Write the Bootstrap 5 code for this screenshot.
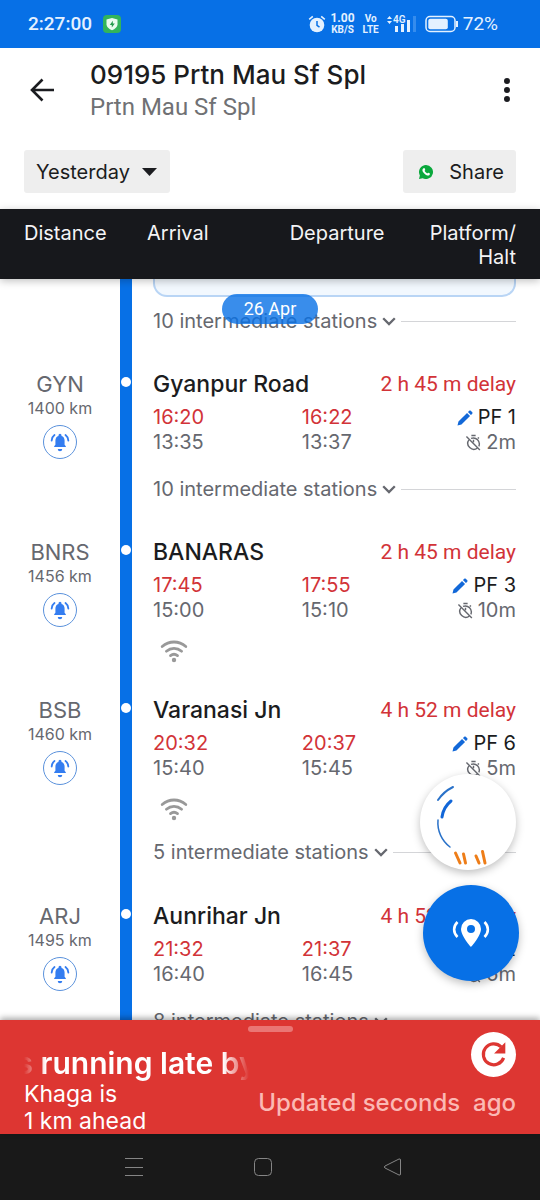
<!DOCTYPE html>
<html lang="en">
<head>
<meta charset="utf-8">
<meta name="viewport" content="width=device-width, initial-scale=1">
<title>09195 Prtn Mau Sf Spl</title>
<link href="https://cdn.jsdelivr.net/npm/bootstrap@5.3.0/dist/css/bootstrap.min.css" rel="stylesheet">
<style>
:root { --rail: #0770e6; --alert: #dd3632; --late: #d23338; --ink: #1b1c20; --soft: #66686f; }
body { font-family: Inter, "Open Sans", sans-serif; color: var(--ink); height: 100vh; background: #fff; }
button { font-family: inherit; }
.roboto { font-family: Roboto, sans-serif; }
.icon-btn { border: 0; background: none; padding: 0; line-height: 0; color: inherit; }
.status-bar { background: var(--rail); color: #e4f1ff; height: 48px; padding: 0 42px 0 28px; font-size: 19px; }
.status-bar .tiny { font-size: 10px; line-height: 11px; font-weight: 700; text-align: center; }
.status-bar .rate { font-size: 12px; }
.title-bar { padding: 12px 24px 0 28px; }
.title-bar h1 { font-size: 26px; line-height: 30px; font-weight: 500; margin: 0; }
.title-bar p { font-size: 24px; line-height: 34px; color: #707174; margin: 0; }
.title-bar .titles { padding-left: 34px; }
.tools { padding: 26px 24px 16px; }
.tool-btn { background: #eee; border: 0; border-radius: 3px; height: 43px; padding: 0 12px; font-size: 20px; color: var(--ink); }
.heads { background: #17181c; color: #f4f4f6; padding: 12px 24px 10px; font-size: 20px; line-height: 24px; display: grid; grid-template-columns: 25% 29% 1fr; box-shadow: 0 2px 8px rgba(0,0,0,.25); z-index: 2; }
.route { min-height: 0; overflow: hidden; }
.code-col { width: 120px; flex: none; text-align: center; color: var(--soft); padding-top: 8px; }
.rail { width: 12px; flex: none; background: var(--rail); display: flex; justify-content: center; padding-top: 13px; }
.rail i { width: 10px; height: 10px; border-radius: 50%; background: #fff; }
.stop-body { padding: 8px 24px 0 21px; min-width: 0; }
.code { font-size: 22px; line-height: 24px; }
.km { font-size: 16px; line-height: 24px; }
.bell { width: 34px; height: 34px; border: 1px solid #5b92dc; border-radius: 50%; color: #347df0; margin-top: 5px; }
.stop-name { font-size: 23px; line-height: 25px; font-weight: 500; margin: 0; }
.delay { font-size: 21px; line-height: 25px; color: var(--late); white-space: nowrap; }
.times { margin-top: 8px; display: grid; grid-template-columns: 41% 1fr auto; font-size: 20px; line-height: 25px; color: var(--soft); }
.times .late { color: var(--late); }
.times .pf { color: var(--ink); }
.times .end { display: flex; align-items: center; justify-content: flex-end; gap: 4px; }
.between { margin: 22px 0 31px; font-size: 20px; line-height: 24px; height: 24px; color: var(--soft); display: flex; align-items: center; gap: 5px; white-space: nowrap; }
.between button { border: 0; background: none; padding: 0; color: inherit; line-height: 24px; display: flex; align-items: center; gap: 5px; }
.between::after { content: ""; flex: 1; height: 1px; background: #d4d5d8; }
.wifi { height: 24px; margin: 16px 0 27px 7px; line-height: 0; }
.wifi + .between { margin: -8px 0 32px; }
.notice { height: 18px; background: #f2f8fe; border: 2px solid #b9d5f5; border-top: 0; border-radius: 0 0 14px 14px; }
.first .stop-body { padding-top: 0; }
.first .between { margin-top: 12px; }
.date-pill { top: 15px; left: 50%; transform: translateX(-50%); width: 96px; line-height: 30px; border-radius: 15px; background: rgba(7,112,230,.8); color: #fff; font-size: 18px; text-align: center; }
.fab { width: 96px; height: 96px; border-radius: 50%; border: 0; padding: 0; line-height: 0; box-shadow: 0 3px 8px rgba(0,0,0,.25); }
.fab.ride { right: 24px; bottom: 150px; background: #fff; }
.fab.locate { right: 21px; bottom: 39px; background: var(--rail); color: #fff; }
.sheet { background: var(--alert); color: #fff; padding: 6px 24px 0; height: 114px; box-shadow: 0 -2px 6px rgba(0,0,0,.35); z-index: 2; }
.grip { width: 45px; height: 6px; border-radius: 3px; background: #ea7674; }
.ticker { width: 225px; margin-top: 13px; font-size: 30px; line-height: 36px; font-weight: 600; white-space: nowrap; overflow: hidden; display: flex; justify-content: center; -webkit-mask-image: linear-gradient(90deg, transparent, #000 22px, #000 calc(100% - 26px), transparent); mask-image: linear-gradient(90deg, transparent, #000 22px, #000 calc(100% - 26px), transparent); }
.near { font-size: 23px; line-height: 27px; margin: 0; }
.updated { font-size: 24px; line-height: 28px; font-weight: 500; color: #fbb9b4; white-space: pre; margin: 12px 0 0 -40px; }
.refresh { width: 45px; height: 45px; border-radius: 50%; background: #fff; color: var(--alert); }
.sys-nav { background: #191919; color: #858585; height: 66px; padding: 0 126px 0 124px; }
</style>
</head>
<body class="d-flex flex-column overflow-hidden">

<svg class="d-none" aria-hidden="true">
  <symbol id="bell" viewBox="0 0 24 24"><path fill="currentColor" d="M19 18v-1l-1.500-1.700v-5c0-2.900-1.400-5-3.700-5.600V4a1.800 1.800 0 0 0-3.600 0v.7C7.900 5.300 6.500 7.400 6.500 10.300v5L5 17v1zM9.300 20.300h5.400a2.700 2.700 0 0 1-5.400 0z"/><path fill="none" stroke="currentColor" stroke-width="2.200" stroke-linecap="round" d="M2 10.200C2.200 7.300 3.400 5 5.400 3.600M22 10.200c-.2-2.900-1.400-5.200-3.400-6.600"/></symbol>
  <symbol id="pencil" viewBox="0 0 24 24"><path fill="currentColor" d="M2 22l1.300-5.300L14.700 5.300l4 4L7.300 20.700zM15.900 4.100l1.500-1.500c.8-.8 1.800-.8 2.500-.1l1.600 1.600c.7.700.7 1.700-.1 2.500l-1.500 1.500z"/></symbol>
  <symbol id="halt" viewBox="0 0 24 24"><g fill="none" stroke="currentColor" stroke-width="2"><path d="M9 2h6M12 8v3.500M18 6.500l1.700-1.700M2 3.500l19 19"/><path d="M8.500 6.300a8.500 8.500 0 0 1 11 11.200M17.600 19.800A8.500 8.500 0 0 1 5.500 8.200"/></g></symbol>
  <symbol id="chev" viewBox="0 0 14 14"><path fill="none" stroke="currentColor" stroke-width="2.300" d="M1.200 4.200 7 10l5.800-5.800"/></symbol>
  <symbol id="wifi" viewBox="0 0 28 24"><g fill="none" stroke="#999" stroke-width="2.800" stroke-linecap="round"><path d="M2.200 7.500c7-6 16.600-6 23.600 0M6.400 12.200c4.500-3.800 10.700-3.800 15.200 0M10.500 16.600c2-1.600 5-1.600 7 0"/></g><circle cx="14" cy="21" r="2.200" fill="#999"/></symbol>
</svg>

<div class="status-bar roboto d-flex align-items-center flex-shrink-0">
  <span class="fw-medium">2:27:00</span>
  <svg class="ms-2" width="26" height="18" viewBox="0 0 26 18"><rect x="3" width="18" height="18" rx="4" fill="#32b45b"/><path d="M12 3l5.500 1.600v5c0 2.500-2.500 4.600-5.500 5.600-3-1-5.500-3.100-5.500-5.600v-5z" fill="#e9fbef"/><path d="M12.800 5.700 9.800 10h2v2.600l3-4.200h-2z" fill="#249a4c"/></svg>
  <svg class="ms-auto" width="18" height="18" viewBox="0 0 18 18"><circle cx="9" cy="10" r="7.300" fill="currentColor"/><path d="M1.200 4.300 4.800 1.300M16.800 4.300l-3.600-3" stroke="currentColor" stroke-width="1.600"/><path d="M9 6v4.300l2.500 1.800" fill="none" stroke="#0770e6" stroke-width="1.500"/></svg>
  <span class="tiny d-flex flex-column ms-1"><span class="rate">1.00</span><span>KB/S</span></span>
  <span class="tiny d-flex flex-column ms-2"><span>Vo</span><span>LTE</span></span>
  <svg class="ms-2" width="30" height="18" viewBox="0 0 30 18"><path d="M0 4l2.500-3L5 4zM0 6l2.500 3L5 6z" fill="currentColor"/><text x="6" y="8" font-size="10" font-weight="600" fill="currentColor">4G</text><path d="M8 11h3v6H8zM14 9h3v8h-3zM20 5h3v12h-3z" fill="currentColor"/><path d="M26 1h3v16h-3z" fill="#358ced"/></svg>
  <svg class="ms-2" width="34" height="18" viewBox="0 0 34 18"><rect x="1" y="1.500" width="29" height="15" rx="4" fill="none" stroke="currentColor" stroke-width="1.500"/><rect x="3.300" y="3.800" width="19.500" height="10.400" rx="2" fill="currentColor"/><path d="M32 6v6" stroke="currentColor" stroke-width="2"/></svg>
  <span class="ms-1">72%</span>
</div>

<header class="flex-shrink-0">
  <div class="title-bar d-flex align-items-center">
    <button class="icon-btn pb-1" aria-label="Back"><svg width="28" height="28" viewBox="0 0 28 28"><path d="M26 14H4M14.500 3.500 4 14l10.500 10.500" fill="none" stroke="currentColor" stroke-width="2.600"/></svg></button>
    <div class="titles flex-grow-1"><h1>09195 Prtn Mau Sf Spl</h1><p class="roboto">Prtn Mau Sf Spl</p></div>
    <button class="icon-btn pb-1" aria-label="More"><svg width="18" height="28" viewBox="0 0 18 28"><g fill="currentColor"><circle cx="9" cy="5" r="3"/><circle cx="9" cy="14" r="3"/><circle cx="9" cy="23" r="3"/></g></svg></button>
  </div>
  <div class="tools d-flex justify-content-between">
    <button class="tool-btn d-flex align-items-center">Yesterday<svg class="ms-2" width="20" height="10" viewBox="0 0 20 10"><path d="M4 1h15l-7.500 8z" fill="currentColor"/></svg></button>
    <button class="tool-btn d-flex align-items-center gap-3"><svg class="ms-1" width="14" height="14" viewBox="0 0 16 16"><path d="M8 0a8 8 0 1 1-3.700 15.100L0 16l1-4.100A8 8 0 0 1 8 0z" fill="#0aa83c"/><path d="M5.300 3.600c.4-.3 1-.2 1.200.3l.6 1.400c.1.300 0 .6-.8 1.400.7 1.400 1.700 2.300 3.100 2.900.7-.9 1-.9 1.300-.8l1.400.7c.7.400.3 1.700-.4 2.200-1.200.8-3.100.2-5.100-1.400-2-1.700-3.100-3.600-2.600-5.100.2-.7.700-1.300 1.300-1.600z" fill="#fff"/></svg>Share</button>
  </div>
</header>

<div class="heads flex-shrink-0 position-relative"><span>Distance</span><span>Arrival</span><div class="d-flex justify-content-between"><span>Departure</span><span class="text-end">Platform/<br>Halt</span></div></div>

<main class="position-relative flex-grow-1 d-flex flex-column route">
  <ul class="list-unstyled m-0">
    <li class="d-flex first">
      <div class="code-col"></div><div class="rail"></div>
      <div class="stop-body flex-grow-1"><div class="notice"></div><div class="between"><button>10 intermediate stations<svg width="14" height="14"><use href="#chev"/></svg></button></div></div>
    </li>
    <li class="d-flex">
      <div class="code-col"><div class="code">GYN</div><div class="km">1400 km</div><button class="icon-btn bell" aria-label="Alert for GYN"><svg width="20" height="20"><use href="#bell"/></svg></button></div>
      <div class="rail"><i></i></div>
      <div class="stop-body flex-grow-1">
        <div class="d-flex justify-content-between"><h2 class="stop-name">Gyanpur Road</h2><span class="delay roboto">2 h 45 m delay</span></div>
        <div class="times"><span class="late">16:20</span><span class="late">16:22</span><span class="end pf"><svg width="18" height="18" color="#1268d8"><use href="#pencil"/></svg>PF 1</span><span>13:35</span><span>13:37</span><span class="end"><svg width="17" height="17"><use href="#halt"/></svg>2m</span></div>
        <div class="between"><button>10 intermediate stations<svg width="14" height="14"><use href="#chev"/></svg></button></div>
      </div>
    </li>
    <li class="d-flex">
      <div class="code-col"><div class="code">BNRS</div><div class="km">1456 km</div><button class="icon-btn bell" aria-label="Alert for BNRS"><svg width="20" height="20"><use href="#bell"/></svg></button></div>
      <div class="rail"><i></i></div>
      <div class="stop-body flex-grow-1">
        <div class="d-flex justify-content-between"><h2 class="stop-name">BANARAS</h2><span class="delay roboto">2 h 45 m delay</span></div>
        <div class="times"><span class="late">17:45</span><span class="late">17:55</span><span class="end pf"><svg width="18" height="18" color="#1268d8"><use href="#pencil"/></svg>PF 3</span><span>15:00</span><span>15:10</span><span class="end"><svg width="17" height="17"><use href="#halt"/></svg>10m</span></div>
        <div class="wifi"><svg width="28" height="24"><use href="#wifi"/></svg></div>
      </div>
    </li>
    <li class="d-flex">
      <div class="code-col"><div class="code">BSB</div><div class="km">1460 km</div><button class="icon-btn bell" aria-label="Alert for BSB"><svg width="20" height="20"><use href="#bell"/></svg></button></div>
      <div class="rail"><i></i></div>
      <div class="stop-body flex-grow-1">
        <div class="d-flex justify-content-between"><h2 class="stop-name">Varanasi Jn</h2><span class="delay roboto">4 h 52 m delay</span></div>
        <div class="times"><span class="late">20:32</span><span class="late">20:37</span><span class="end pf"><svg width="18" height="18" color="#1268d8"><use href="#pencil"/></svg>PF 6</span><span>15:40</span><span>15:45</span><span class="end"><svg width="17" height="17"><use href="#halt"/></svg>5m</span></div>
        <div class="wifi"><svg width="28" height="24"><use href="#wifi"/></svg></div>
        <div class="between"><button>5 intermediate stations<svg width="14" height="14"><use href="#chev"/></svg></button></div>
      </div>
    </li>
    <li class="d-flex">
      <div class="code-col"><div class="code">ARJ</div><div class="km">1495 km</div><button class="icon-btn bell" aria-label="Alert for ARJ"><svg width="20" height="20"><use href="#bell"/></svg></button></div>
      <div class="rail"><i></i></div>
      <div class="stop-body flex-grow-1">
        <div class="d-flex justify-content-between"><h2 class="stop-name">Aunrihar Jn</h2><span class="delay roboto">4 h 52 m delay</span></div>
        <div class="times"><span class="late">21:32</span><span class="late">21:37</span><span class="end pf"><svg width="18" height="18" color="#1268d8"><use href="#pencil"/></svg>PF 2</span><span>16:40</span><span>16:45</span><span class="end"><svg width="17" height="17"><use href="#halt"/></svg>5m</span></div>
        <div class="between"><button>8 intermediate stations<svg width="14" height="14"><use href="#chev"/></svg></button></div>
      </div>
    </li>
  </ul>
  <div class="date-pill position-absolute roboto">26 Apr</div>
  <button class="fab ride position-absolute" aria-label="Book a ride"><svg width="96" height="96" viewBox="0 0 96 96" fill="none" stroke-linecap="round"><path d="M18 26c4-6 9-10 15-13" stroke="#2a72c9" stroke-width="2"/><path d="M22 43c1-7 4-12 9-16" stroke="#1166d8" stroke-width="3"/><path d="M18 46c-1 11 4 21 12 27" stroke="#2a72c9" stroke-width="1.500"/><path d="M35.500 79l4.500 10M43.500 80l2 9M56 82l3 7M62.500 77.500 65 89" stroke="#ee7d18" stroke-width="3"/></svg></button>
  <button class="fab locate position-absolute" aria-label="Locate train"><svg width="40" height="32" viewBox="0 0 40 32"><path fill="currentColor" fill-rule="evenodd" d="M20 2a10 10 0 0 1 10 10c0 7-10 18-10 18S10 19 10 12A10 10 0 0 1 20 2zm0 6a4 4 0 1 0 0 8 4 4 0 0 0 0-8z"/><path d="M6.500 5c-4.500 4.500-4.500 10.500 0 15M33.500 5c4.500 4.500 4.500 10.500 0 15" fill="none" stroke="currentColor" stroke-width="2.600"/></svg></button>
</main>

<section class="sheet position-relative flex-shrink-0">
  <div class="grip mx-auto"></div>
  <div class="d-flex justify-content-between">
    <div><div class="ticker"><span>s running late by</span></div><p class="near">Khaga is<br>1 km ahead</p></div>
    <div class="d-flex flex-column align-items-end"><button class="icon-btn refresh" aria-label="Refresh"><svg width="27" height="27" viewBox="0 0 24 24"><path fill="none" stroke="currentColor" stroke-width="2.800" d="M18.800 5.200A9.300 9.300 0 1 0 21 15"/><path fill="currentColor" d="M22.500 1v10h-10z"/></svg></button><p class="updated">Updated seconds  ago</p></div>
  </div>
</section>

<nav class="sys-nav d-flex align-items-center justify-content-between flex-shrink-0" aria-label="System">
  <button class="icon-btn" aria-label="Recent apps"><svg width="20" height="20"><path d="M1 1.500h18M1 10.500h18M1 18.500h18" stroke="currentColor"/></svg></button>
  <button class="icon-btn" aria-label="Home"><svg width="20" height="20"><rect x="1.500" y="1.500" width="17" height="17" rx="4" fill="none" stroke="currentColor"/></svg></button>
  <button class="icon-btn" aria-label="Go back"><svg width="32" height="20"><path d="M17 2 3 9q-1.500 1 0 2l14 7q1.500.5 1.500-1V3q0-1.500-1.500-1z" fill="none" stroke="currentColor"/></svg></button>
</nav>
<script src="https://cdn.jsdelivr.net/npm/bootstrap@5.3.0/dist/js/bootstrap.bundle.min.js"></script>
</body>
</html>
